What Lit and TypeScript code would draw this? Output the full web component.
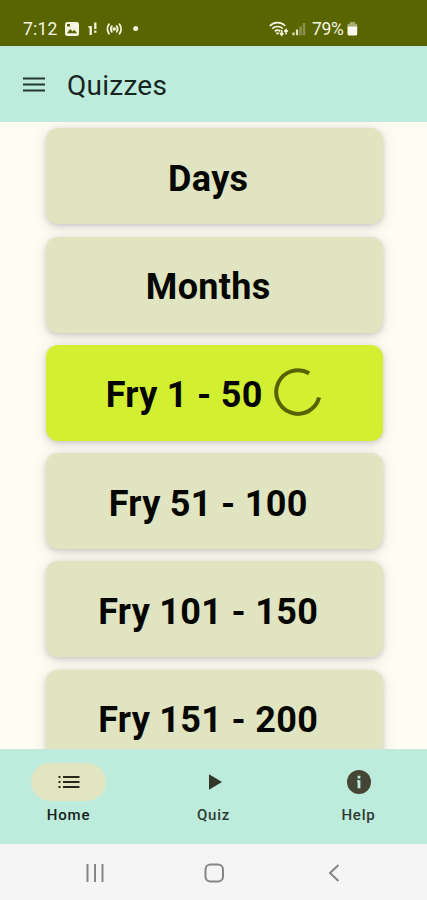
import { LitElement, html, css, svg, nothing } from "lit";
import { customElement, property } from "lit/decorators.js";

@customElement("status-bar")
class StatusBar extends LitElement {
  static styles = css`
    :host { display: block; height: 46px; background: #596500; box-sizing: border-box; border-bottom: 1px solid #526009; color: #f3f5e0; }
    .bar { display: flex; align-items: center; height: 45px; padding: 13px 69px 0 23px; box-sizing: border-box; }
    .time, .pct { font: 400 17.5px/20px Roboto, sans-serif; }
    .time { width: 41px; letter-spacing: 0.2px; }
    .pct { width: 35px; letter-spacing: -0.3px; }
    .grow { flex: 1; }
    svg { display: block; }
  `;
  render() {
    return html`<div class="bar">
      <span class="time">7:12</span>
      <svg width="85" height="18" viewBox="64 20 85 18">
        <rect x="65" y="22" width="14" height="14" rx="2.5" fill="#f3f5e0" />
        <path d="M67 33.2l3.2-4.2 2.3 2.6 1.8-1.8 2.9 3.4z" fill="#596500" />
        <rect x="67" y="24" width="3" height="2.5" fill="#596500" />
        <path d="M90.700 26v9M95.300 22.500v6.500M95.300 30.500v2.200" stroke="#f3f5e0" stroke-width="2.300" />
        <path d="M88.300 27h2.400" stroke="#f3f5e0" stroke-width="1.500" />
        <g fill="none" stroke="#f3f5e0" stroke-width="1.900" stroke-linecap="round">
          <path d="M109 24.300c-2 2.700-2 6.700 0 9.400M119.500 24.300c2 2.700 2 6.700 0 9.400M111.800 26.300c-1.200 1.700-1.200 3.700 0 5.400M116.700 26.300c1.200 1.700 1.200 3.700 0 5.400" />
        </g>
        <circle cx="114.200" cy="29" r="1.700" fill="#f3f5e0" />
        <circle cx="135.700" cy="28.500" r="2.500" fill="#f3f5e0" />
      </svg>
      <span class="grow"></span>
      <svg width="43" height="18" viewBox="269 20 43 18">
        <g fill="none" stroke="#f3f5e0" stroke-width="1.700">
          <path d="M269.800 25.800c4.500-4.200 11-4.200 15.500 0M272.300 28.600c3-2.800 7.500-2.800 10.500 0M274.800 31.300c1.700-1.500 3.800-1.500 5.500 0" />
        </g>
        <path d="M275.500 32.500h4l-2 2.500z" fill="#f3f5e0" />
        <path d="M281.700 30v5M280 33l1.700 2.200 1.700-2.200M286 34.500v-5M284.300 31.700l1.700-2.200 1.700 2.200" stroke="#f3f5e0" stroke-width="1.500" fill="none" />
        <path d="M293.500 32.500v2.800M297 29.500v5.800" stroke="#dfe3bf" stroke-width="2.200" />
        <path d="M300.500 26.500v8.800M304 23v12.300" stroke="#89924d" stroke-width="2.600" />
      </svg>
      <span class="pct">79%</span>
      <svg width="11" height="18" viewBox="347 20 11 18">
        <path d="M350 22h5v1.800h2.200v4h-9.700v-4h2.500z" fill="#a5ab72" />
        <path d="M347.500 26.500h9.700v7.500q0 1.500-1.500 1.500h-6.700q-1.500 0-1.500-1.500z" fill="#f8f9ec" />
      </svg>
    </div>`;
  }
}

@customElement("quiz-card")
class QuizCard extends LitElement {
  @property() label = "";
  @property({ type: Boolean, reflect: true }) loading = false;
  static styles = css`
    :host { display: flex; align-items: center; justify-content: center; flex: none; height: 96px; border-radius: 12px; background: #e0e4c1; box-shadow: 0 2px 5px rgba(70, 60, 90, 0.18), 0 2px 14px rgba(70, 60, 90, 0.16); color: #050602; font: 700 36px/42px Roboto, sans-serif; }
    :host([loading]) { background: #d2f031; }
    .label { padding-top: 5px; margin-right: 11.5px; white-space: nowrap; letter-spacing: 0.32px; }
    svg { display: block; margin-top: -1px; }
  `;
  render() {
    return html`<span class="label">${this.label}</span>${this.loading
      ? html`<svg width="48" height="48" viewBox="-24 -24 48 48"><path d="M11.200-18.700A21.800 21.800 0 1 0 21.100 5.600" fill="none" stroke="#566300" stroke-width="4" /></svg>`
      : nothing}`;
  }
}

const tabs = [
  { name: "Home", active: true, icon: svg`<path d="M-6-5H10.500M-6 0H10.500M-6 5H10.500" stroke="#27281a" stroke-width="2.200"/><path d="M-10.500-5h2M-10.500 0h2M-10.500 5h2" stroke="#27281a" stroke-width="2.200"/>` },
  { name: "Quiz", active: false, icon: svg`<path d="M-5-7.800L8 0L-5 7.800z" fill="#333629"/>` },
  { name: "Help", active: false, icon: svg`<circle r="12" fill="#454536"/><path d="M0-6.200v2.700M0-1.700v7.900" stroke="#bdecdd" stroke-width="2.800"/><path d="M-2-1h2" stroke="#bdecdd" stroke-width="1.400"/>` },
];

@customElement("app-root")
class AppRoot extends LitElement {
  static styles = css`
    :host { display: flex; flex-direction: column; height: 900px; width: 427px; overflow: hidden; background: #fffdf2; font-family: Roboto, sans-serif; }
    status-bar, .top, .tabs, .system { flex: none; }
    .top { display: flex; align-items: center; gap: 22px; height: 76px; padding-left: 23px; box-sizing: border-box; background: #bdecdd; }
    .title { font-size: 28px; line-height: 32px; letter-spacing: 0.25px; color: #17251f; padding-top: 3px; font-weight: 400; margin: 0; }
    svg { display: block; }
    .burger { margin-top: 2px; }
    .list { flex: 1; min-height: 0; overflow: hidden; display: flex; flex-direction: column; gap: 12.25px; padding: 6.25px 44.5px 0 45.5px; }
    .tabs { display: grid; grid-template-columns: 137px 1fr 137px; height: 95px; box-sizing: border-box; background: #bdecdd; }
    .tab { display: flex; flex-direction: column; align-items: center; padding-top: 14px; }
    .pill { display: grid; place-items: center; width: 75px; height: 38px; border-radius: 19px; }
    .active .pill { background: #e2e5c2; }
    .name { font-size: 15px; line-height: 18px; margin-top: 5px; letter-spacing: 0.8px; font-weight: 500; color: #303a31; }
    .active .name { color: #17211b; }
    .system { display: flex; align-items: center; height: 56px; background: #f5f5f5; }
    .system svg { stroke: #858585; fill: none; stroke-width: 2; }
  `;
  render() {
    const labels = ["Days", "Months", "Fry 1 - 50", "Fry 51 - 100", "Fry 101 - 150", "Fry 151 - 200"];
    return html`<status-bar></status-bar>
      <header class="top">
        <svg class="burger" width="22" height="18" viewBox="0 0 22 18"><path d="M0 2.500h22M0 8.500h22M0 14.500h22" stroke="#25372f" stroke-width="2.200" /></svg>
        <h1 class="title">Quizzes</h1>
      </header>
      <main class="list">${labels.map((l) => html`<quiz-card .label=${l} ?loading=${l === "Fry 1 - 50"}></quiz-card>`)}</main>
      <nav class="tabs">${tabs.map((t) => html`<div class="tab ${t.active ? "active" : ""}">
        <div class="pill"><svg width="26" height="26" viewBox="-13 -13 26 26">${t.icon}</svg></div>
        <span class="name">${t.name}</span></div>`)}</nav>
      <footer class="system">
        <svg width="427" height="56" viewBox="0 844 427 56">
          <path d="M87.500 864v18M95 864v18M102.500 864v18" />
          <rect x="205.500" y="864.500" width="17.500" height="17" rx="5" />
          <path d="M338.500 865l-8.500 8 8.500 8" />
        </svg>
      </footer>`;
  }
}
